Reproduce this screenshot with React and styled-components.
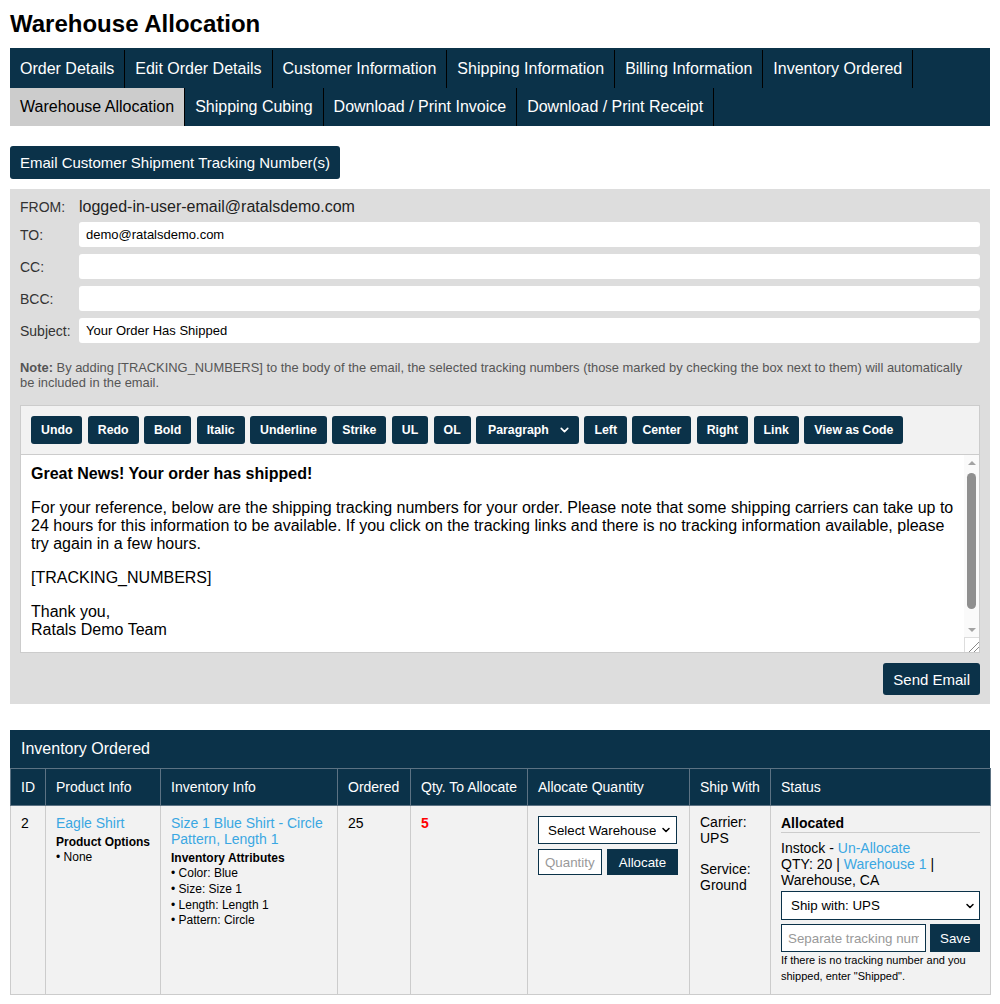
import React from "react";
import styled, { createGlobalStyle } from "styled-components";
import { ChevronDown } from "lucide-react";

const navy = "#0b3249";
const link = "#3aa7e2";
const arrow = "#a3a3a3";

const GlobalStyle = createGlobalStyle`
  body {
    margin: 0;
    font-family: "Liberation Sans", Arial, sans-serif;
    color: #000;
    background: #fff;
  }
  * { box-sizing: border-box; }
`;

const Page = styled.div`
  padding: 10px;
`;

const Title = styled.h1`
  margin: 0 0 10px;
  font-size: 24px;
  line-height: 28px;
`;

const TabBar = styled.div`
  display: flex;
  flex-wrap: wrap;
  background: ${navy};
  padding-top: 2px;
`;

const Tab = styled.div`
  height: 38px;
  padding: 0 10px;
  display: flex;
  align-items: center;
  font-size: 16px;
  color: ${(p) => (p.$active ? "#000" : "#fff")};
  background: ${(p) => (p.$active ? "#ccc" : "transparent")};
  border-right: 1px solid #000;
  cursor: pointer;
`;

const NavyButton = styled.button`
  height: ${(p) => p.$h || 28}px;
  padding: 0 10px;
  background: ${navy};
  color: #fff;
  border: none;
  border-radius: ${(p) => (p.$square ? 0 : 3)}px;
  font-family: inherit;
  font-size: ${(p) => p.$size || 13.333}px;
  font-weight: ${(p) => (p.$bold ? "bold" : "normal")};
  white-space: nowrap;
  cursor: pointer;
`;

const EmailButton = styled(NavyButton)`
  margin-top: 20px;
`;

const Panel = styled.div`
  margin-top: 10px;
  background: #ddd;
  padding: 10px 10px 9px;
`;

const FieldGrid = styled.div`
  display: grid;
  grid-template-columns: 59px 1fr;
  grid-template-rows: 16px repeat(4, 25px);
  row-gap: 7px;
  align-items: center;
`;

const Label = styled.div`
  font-size: 14px;
  color: #333;
`;

const FromValue = styled.div`
  font-size: 16px;
  line-height: 18px;
  color: #222;
`;

const TextInput = styled.input`
  height: 25px;
  border: none;
  border-radius: 3px;
  padding: 0 7px;
  font-family: inherit;
  font-size: 13px;
  background: #fff;
  outline: none;
`;

const Note = styled.p`
  margin: 17px 0 15px;
  font-size: 12.9px;
  line-height: 15px;
  color: #555;
`;

const Editor = styled.div`
  border: 1px solid #ccc;
  background: #fff;
`;

const Toolbar = styled.div`
  display: flex;
  flex-wrap: wrap;
  gap: 5.4px;
  padding: 10px;
  background: #f2f2f2;
  border-bottom: 1px solid #ccc;
`;

const SelectWrap = styled.div`
  position: relative;
  width: ${(p) => p.$w};
  svg {
    position: absolute;
    right: ${(p) => p.$arrowRight || 8}px;
    top: 50%;
    transform: translateY(-50%);
    pointer-events: none;
    color: ${(p) => (p.$dark ? "#fff" : "#000")};
  }
`;

const Select = styled.select`
  appearance: none;
  width: 100%;
  height: ${(p) => p.$h}px;
  padding: 0 20px 0 ${(p) => p.$pl || 9}px;
  font-family: inherit;
  font-size: ${(p) => p.$size || 13.333}px;
  font-weight: ${(p) => (p.$bold ? "bold" : "normal")};
  color: ${(p) => (p.$dark ? "#fff" : "#000")};
  background: ${(p) => (p.$dark ? navy : "#fff")};
  border: ${(p) => (p.$dark ? "none" : `1px solid ${navy}`)};
  border-radius: ${(p) => (p.$dark ? 3 : 0)}px;
  outline: none;
`;

const EditorBody = styled.div`
  display: flex;
  height: 197px;
`;

const EditorContent = styled.div`
  flex: 1;
  overflow: hidden;
  padding: 10px;
  font-size: 16px;
  line-height: 18px;
  p {
    margin: 0 0 16px;
  }
`;

/* scroll rail of the editable area, drawn as the browser shows it */
const Rail = styled.div`
  width: 15px;
  display: flex;
  flex-direction: column;
  background: #fafafa;
`;

const RailArrow = styled.div`
  height: 15px;
  display: flex;
  align-items: center;
  justify-content: center;
  &::before {
    content: "";
    border-left: 4px solid transparent;
    border-right: 4px solid transparent;
    ${(p) => (p.$down ? "border-top" : "border-bottom")}: 4px solid ${arrow};
  }
`;

const RailTrack = styled.div`
  flex: 1;
  padding: 3px 3px 13px;
  display: flex;
`;

const Thumb = styled.div`
  flex: 1;
  background: #8f8f8f;
  border-radius: 5px;
`;

const Grip = styled.div`
  height: 15px;
  background:
    linear-gradient(
      135deg,
      transparent 62%,
      #8a8a8a 62%,
      #8a8a8a 67%,
      transparent 67%,
      transparent 79%,
      #8a8a8a 79%,
      #8a8a8a 84%,
      transparent 84%
    ),
    #fff;
  border-top: 1px solid #ddd;
  border-left: 1px solid #ddd;
`;

const SendRow = styled.div`
  display: flex;
  justify-content: flex-end;
  margin-top: 10px;
`;

const Section = styled.div`
  margin-top: 26px;
`;

const TableTitle = styled.div`
  height: 38px;
  padding: 0 11px;
  display: flex;
  align-items: center;
  background: ${navy};
  color: #fff;
  font-size: 16px;
`;

const Table = styled.table`
  width: 100%;
  border-collapse: collapse;
  table-layout: fixed;
`;

const Th = styled.th`
  height: 37px;
  padding: 0 10px;
  background: ${navy};
  color: #fff;
  font-size: 14px;
  font-weight: normal;
  text-align: left;
  border: 1px solid #5c7283;
  white-space: nowrap;
`;

const Td = styled.td`
  padding: 9px 10px 10px;
  vertical-align: top;
  background: #f2f2f2;
  border: 1px solid #ccc;
  font-size: 14px;
  line-height: 16px;
`;

const Link = styled.a`
  color: ${link};
  text-decoration: none;
  cursor: pointer;
`;

const SubHead = styled.div`
  margin-top: 3px;
  font-size: 12px;
  font-weight: bold;
  line-height: 16px;
`;

const Bullets = styled.div`
  font-size: 12px;
  line-height: 15.75px;
`;

const Red = styled.span`
  color: #f00;
  font-weight: bold;
`;

const Row = styled.div`
  display: flex;
  gap: ${(p) => p.$gap || 5}px;
  margin-top: ${(p) => p.$mt || 0}px;
`;

const BoxInput = styled.input`
  width: ${(p) => p.$w || "auto"};
  flex: ${(p) => (p.$grow ? 1 : "none")};
  min-width: 0;
  height: ${(p) => p.$h}px;
  padding: 0 6px;
  border: 1px solid ${navy};
  font-family: inherit;
  font-size: 13.333px;
  background: #fff;
  outline: none;
  &::placeholder {
    color: #999;
  }
`;

const Block = styled.div`
  margin-top: ${(p) => p.$mt || 0}px;
`;

const ShipText = styled.div`
  line-height: 15.5px;
  margin-top: ${(p) => p.$mt || 0}px;
`;

const StatusTitle = styled.div`
  font-weight: bold;
  line-height: 16px;
  padding-bottom: 1px;
  border-bottom: 1px solid #ccc;
  margin-bottom: 7px;
`;

const Hint = styled.div`
  font-size: 11px;
  line-height: 16px;
`;

const tabs = [
  "Order Details",
  "Edit Order Details",
  "Customer Information",
  "Shipping Information",
  "Billing Information",
  "Inventory Ordered",
  "Warehouse Allocation",
  "Shipping Cubing",
  "Download / Print Invoice",
  "Download / Print Receipt",
];

const tools = ["Undo", "Redo", "Bold", "Italic", "Underline", "Strike", "UL", "OL"];
const tools2 = ["Left", "Center", "Right", "Link", "View as Code"];

const columns = [
  ["ID", 35],
  ["Product Info", 115],
  ["Inventory Info", 177],
  ["Ordered", 73],
  ["Qty. To Allocate", 117],
  ["Allocate Quantity", 162],
  ["Ship With", 81],
  ["Status", 220],
];

export default function App() {
  return (
    <Page>
      <GlobalStyle />
      <Title>Warehouse Allocation</Title>
      <TabBar>
        {tabs.map((t) => (
          <Tab key={t} $active={t === "Warehouse Allocation"}>
            {t}
          </Tab>
        ))}
      </TabBar>

      <EmailButton $h={33} $size={15}>
        Email Customer Shipment Tracking Number(s)
      </EmailButton>

      <Panel>
        <FieldGrid>
          <Label>FROM:</Label>
          <FromValue>logged-in-user-email@ratalsdemo.com</FromValue>
          <Label>TO:</Label>
          <TextInput defaultValue="demo@ratalsdemo.com" />
          <Label>CC:</Label>
          <TextInput />
          <Label>BCC:</Label>
          <TextInput />
          <Label>Subject:</Label>
          <TextInput defaultValue="Your Order Has Shipped" />
        </FieldGrid>
        <Note>
          <b>Note:</b> By adding [TRACKING_NUMBERS] to the body of the email, the selected
          tracking numbers (those marked by checking the box next to them) will automatically
          be included in the email.
        </Note>

        <Editor>
          <Toolbar>
            {tools.map((t) => (
              <NavyButton key={t} $bold $size={12.3}>
                {t}
              </NavyButton>
            ))}
            <SelectWrap $w="103px" $dark>
              <Select $h={28} $dark $bold $size={12.3} $pl={12}>
                <option>Paragraph</option>
              </Select>
              <ChevronDown size={13} strokeWidth={3} />
            </SelectWrap>
            {tools2.map((t) => (
              <NavyButton key={t} $bold $size={12.3}>
                {t}
              </NavyButton>
            ))}
          </Toolbar>
          <EditorBody>
            <EditorContent>
              <p>
                <b>Great News! Your order has shipped!</b>
              </p>
              <p>
                For your reference, below are the shipping tracking numbers for your order.
                Please note that some shipping carriers can take up to 24 hours for this
                information to be available. If you click on the tracking links and there is no
                tracking information available, please try again in a few hours.
              </p>
              <p>[TRACKING_NUMBERS]</p>
              <p>
                Thank you,
                <br />
                Ratals Demo Team
              </p>
            </EditorContent>
            <Rail>
              <RailArrow />
              <RailTrack>
                <Thumb />
              </RailTrack>
              <RailArrow $down />
              <Grip />
            </Rail>
          </EditorBody>
        </Editor>

        <SendRow>
          <NavyButton $h={32} $size={15}>
            Send Email
          </NavyButton>
        </SendRow>
      </Panel>

      <Section>
        <TableTitle>Inventory Ordered</TableTitle>
        <Table>
          <colgroup>
            {columns.map(([c, w]) => (
              <col key={c} style={{ width: w }} />
            ))}
          </colgroup>
          <thead>
            <tr>
              {columns.map(([c]) => (
                <Th key={c}>{c}</Th>
              ))}
            </tr>
          </thead>
          <tbody>
            <tr>
              <Td>2</Td>
              <Td>
                <Link>Eagle Shirt</Link>
                <SubHead>Product Options</SubHead>
                <Bullets>• None</Bullets>
              </Td>
              <Td>
                <Link>Size 1 Blue Shirt - Circle Pattern, Length 1</Link>
                <SubHead>Inventory Attributes</SubHead>
                <Bullets>
                  • Color: Blue
                  <br />• Size: Size 1
                  <br />• Length: Length 1
                  <br />• Pattern: Circle
                </Bullets>
              </Td>
              <Td>25</Td>
              <Td>
                <Red>5</Red>
              </Td>
              <Td>
                <Block $mt={1}>
                  <SelectWrap $w="139px" $arrowRight={5}>
                    <Select $h={28}>
                      <option>Select Warehouse</option>
                    </Select>
                    <ChevronDown size={12} strokeWidth={3} />
                  </SelectWrap>
                </Block>
                <Row $mt={5}>
                  <BoxInput $w="64px" $h={26} placeholder="Quantity" />
                  <NavyButton $h={26} $square style={{ width: 71 }}>
                    Allocate
                  </NavyButton>
                </Row>
              </Td>
              <Td>
                <ShipText>
                  Carrier:
                  <br />
                  UPS
                </ShipText>
                <ShipText $mt={16}>
                  Service:
                  <br />
                  Ground
                </ShipText>
              </Td>
              <Td>
                <StatusTitle>Allocated</StatusTitle>
                <div>
                  Instock - <Link>Un-Allocate</Link>
                  <br />
                  QTY: 20 | <Link>Warehouse 1</Link> |
                  <br />
                  Warehouse, CA
                </div>
                <Block $mt={3}>
                  <SelectWrap $w="100%" $arrowRight={4}>
                    <Select $h={29}>
                      <option>Ship with: UPS</option>
                    </Select>
                    <ChevronDown size={12} strokeWidth={3} />
                  </SelectWrap>
                </Block>
                <Row $gap={4} $mt={4}>
                  <BoxInput $grow $h={28} placeholder="Separate tracking numbers" />
                  <NavyButton $h={28} $square style={{ width: 50 }}>
                    Save
                  </NavyButton>
                </Row>
                <Hint>If there is no tracking number and you shipped, enter "Shipped".</Hint>
              </Td>
            </tr>
          </tbody>
        </Table>
      </Section>
    </Page>
  );
}
